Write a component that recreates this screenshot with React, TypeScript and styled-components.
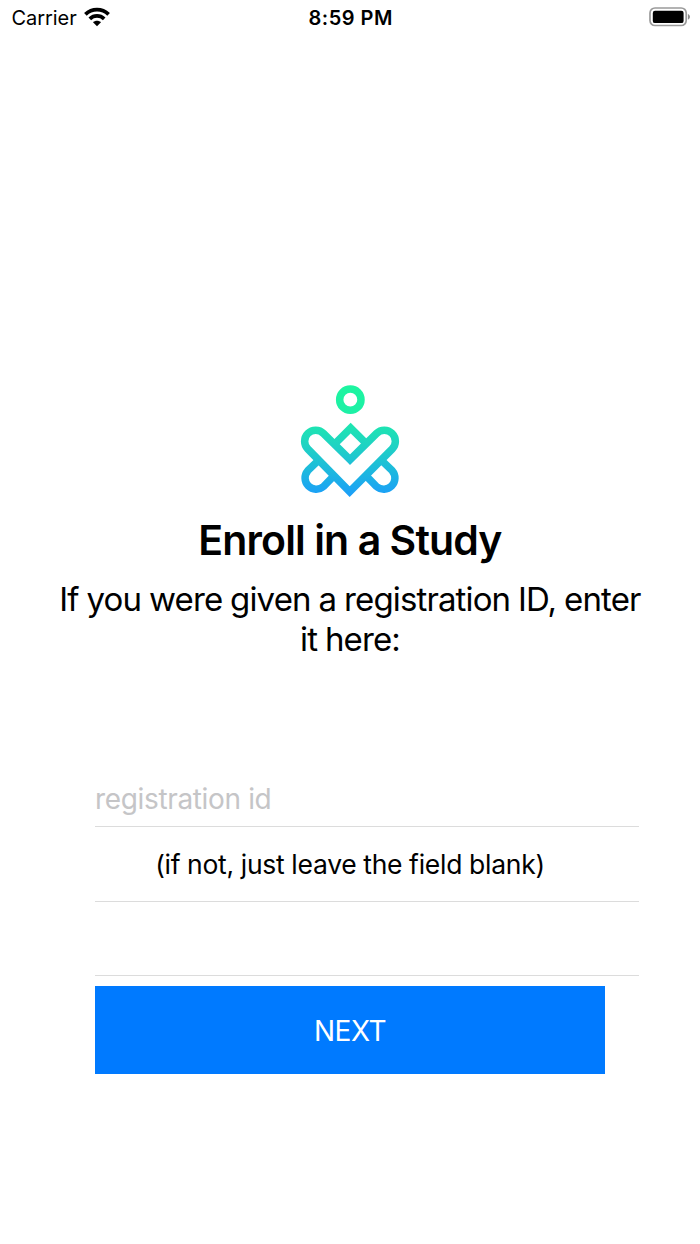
import React from "react";
import styled, { createGlobalStyle } from "styled-components";

const GlobalStyle = createGlobalStyle`
  *, *::before, *::after { box-sizing: border-box; }
  body { margin: 0; background: #fff; }
`;

const Screen = styled.div`
  width: 700px;
  height: 1244px;
  display: flex;
  flex-direction: column;
  background: #fff;
  color: #000;
  font-family: Inter, "Liberation Sans", sans-serif;
  overflow: hidden;
`;

const StatusBar = styled.header`
  display: grid;
  grid-template-columns: 1fr auto 1fr;
  align-items: center;
  height: 36px;
  padding: 0 9px 0 11.5px;
  font-size: 20px;
  line-height: 36px;
`;

const Carrier = styled.div`
  display: flex;
  align-items: center;
  gap: 7px;
  letter-spacing: -0.05px;
  svg { margin-bottom: 2px; }
`;

const Clock = styled.time`
  margin-right: 1px;
  font-weight: 600;
  letter-spacing: 0.5px;
`;

const BatterySlot = styled.div`
  display: flex;
  justify-content: flex-end;
  padding-bottom: 2px;
`;

const Intro = styled.section`
  display: flex;
  flex-direction: column;
  align-items: center;
  padding-top: 339px;
  text-align: center;
`;

const Logo = styled.svg`
  display: block;
  width: 120px;
  height: 130px;
`;

const Title = styled.h1`
  margin: 10px 0 0;
  font-size: 41px;
  line-height: 50px;
  font-weight: 600;
  letter-spacing: -0.85px;
  word-spacing: -0.2px;
`;

const Prompt = styled.p`
  width: 596px;
  margin: 14px 0 0;
  font-size: 33px;
  line-height: 40px;
  letter-spacing: -0.86px;
  word-spacing: -0.6px;
`;

const Form = styled.form`
  display: flex;
  flex-direction: column;
  width: 544px;
  margin: 112px 0 0 95px;
`;

const Row = styled.div<{ $height: number }>`
  display: flex;
  align-items: center;
  height: ${(p) => p.$height}px;
  border-bottom: 1px solid #dcdcdc;
`;

const Field = styled.input`
  width: 100%;
  height: 54px;
  padding: 0;
  border: 0;
  outline: 0;
  background: transparent;
  font: 400 28px Inter, "Liberation Sans", sans-serif;
  letter-spacing: -0.35px;
  &::placeholder { color: #c5c5c7; opacity: 1; }
`;

const Hint = styled.span`
  width: 510px;
  text-align: center;
  font-size: 26.5px;
  line-height: 36px;
  letter-spacing: -0.25px;
  word-spacing: -0.4px;
`;

const NextButton = styled.button`
  width: 510px;
  height: 88px;
  margin-top: 10px;
  padding: 2px 0 0;
  border: 0;
  background: #007aff;
  color: #fff;
  font: 400 28px Inter, "Liberation Sans", sans-serif;
  letter-spacing: -0.45px;
`;

function WifiIcon() {
  return (
    <svg width="26" height="20" viewBox="0 0 26 20" fill="none" stroke="#000" strokeWidth="3.8">
      <path d="M1.4 7.4C8 1.1 18 1.1 24.6 7.4" />
      <path d="M5.8 11.8C9.9 8 16.1 8 20.2 11.8" />
      <path d="M13 19.2L9 15.3C11.2 13.3 14.8 13.3 17 15.3Z" fill="#000" stroke="none" />
    </svg>
  );
}

function BatteryIcon() {
  return (
    <svg width="42" height="20" viewBox="0 0 42 20">
      <rect x="1" y="1" width="36.2" height="17.5" rx="5" fill="none" stroke="#9a9a9a" strokeWidth="1.7" />
      <rect x="3.8" y="3.7" width="30.8" height="12.4" rx="2.2" fill="#000" />
      <path d="M38.9 7C41.6 8 41.6 11.8 38.9 12.6Z" fill="#8c8c8c" />
    </svg>
  );
}

function BrandLogo() {
  return (
    <Logo viewBox="0 0 360 390" aria-hidden="true">
      <defs>
        <linearGradient id="brand" gradientUnits="userSpaceOnUse" x1="0" y1="30" x2="0" y2="366">
          <stop offset="0" stopColor="#1df5a0" />
          <stop offset="0.25" stopColor="#1df0a6" />
          <stop offset="0.55" stopColor="#1fd2c4" />
          <stop offset="1" stopColor="#1b9dfa" />
        </linearGradient>
      </defs>
      <g fill="none" stroke="url(#brand)" strokeWidth="22.5" strokeMiterlimit="10">
        <circle cx="181" cy="74" r="32" />
        <path d="M180 254L100.5 175.5A33 33 0 0 0 53.5 222L179 350L306.5 222A33 33 0 0 0 259.5 175.5Z" />
        <path d="M133 208L182 159L229 206" />
        <path d="M87 254.5L53.5 287A33.5 33.5 0 0 0 100.5 334.5L133 301" />
        <path d="M273 254.5L306.5 287A33.5 33.5 0 0 1 259.5 334.5L227 301" />
      </g>
    </Logo>
  );
}

export default function App() {
  return (
    <Screen>
      <GlobalStyle />
      <StatusBar>
        <Carrier>
          Carrier
          <WifiIcon />
        </Carrier>
        <Clock>8:59 PM</Clock>
        <BatterySlot>
          <BatteryIcon />
        </BatterySlot>
      </StatusBar>
      <Intro>
        <BrandLogo />
        <Title>Enroll in a Study</Title>
        <Prompt>If you were given a registration ID, enter it here:</Prompt>
      </Intro>
      <Form>
        <Row $height={56}>
          <Field placeholder="registration id" aria-label="registration id" />
        </Row>
        <Row $height={75}>
          <Hint>(if not, just leave the field blank)</Hint>
        </Row>
        <Row $height={74} />
        <NextButton type="button">NEXT</NextButton>
      </Form>
    </Screen>
  );
}
